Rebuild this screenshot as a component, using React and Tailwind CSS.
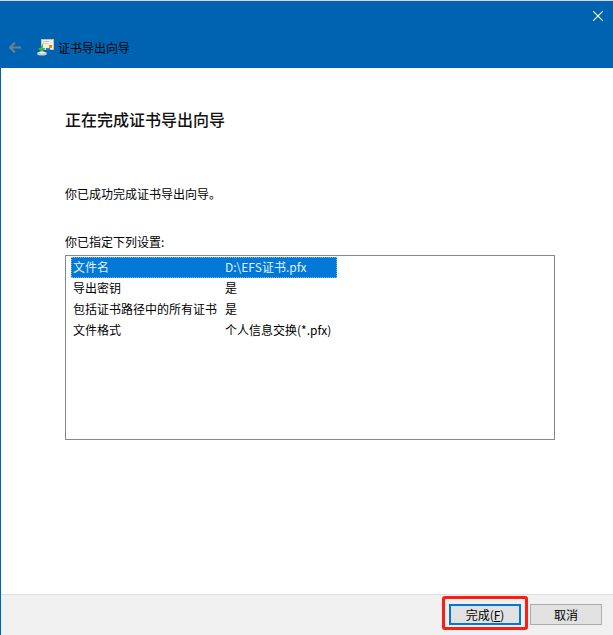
import React from "react";

const rows = [
  ["文件名", "D:\\EFS证书.pfx"],
  ["导出密钥", "是"],
  ["包括证书路径中的所有证书", "是"],
  ["文件格式", "个人信息交换(*.pfx)"],
];

const WizardIcon = () => (
  <svg width="17" height="17" viewBox="0 0 17 17" className="mr-[4px]">
    <rect x="4.5" y="0.5" width="12" height="10" fill="#f3efe2" stroke="#c4bfae" />
    <rect x="6" y="2" width="6" height="1" fill="#c9c3b0" />
    <rect x="6" y="4" width="5" height="1" fill="#d6d1c0" />
    <rect x="12" y="6" width="3" height="3" fill="#e08a12" />
    <rect x="9" y="9" width="4" height="2" fill="#3a78c9" />
    <path d="M6 4 L6 9 L8.5 9 L4.5 13 L1 9 L3.5 9 Z" fill="#3fb83a" />
    <ellipse cx="5" cy="14.5" rx="5" ry="2" fill="#c6cac6" />
    <ellipse cx="5" cy="13.5" rx="3" ry="1" fill="#f4f5f3" />
  </svg>
);

const App = () => {
  return (
    <div className="w-[613px] h-[635px] flex flex-col bg-white text-[12px] text-black overflow-hidden font-['Noto_Sans_CJK_SC','Noto_Sans',sans-serif]">
      <div className="h-px bg-[#d6d6d6]" />
      <header className="h-[67px] bg-[#0063b1] relative flex items-center pt-[26px] shrink-0">
        <svg width="12" height="11" viewBox="0 0 12 11" className="ml-[9px] mr-[16px]">
          <path d="M6 0.5 L1 5.5 L6 10.5 M1 5.5 H12" fill="none" stroke="#6f7f8f" strokeWidth="2" />
        </svg>
        <WizardIcon />
        <span className="text-[12px] leading-4 text-[#050505]">证书导出向导</span>
        <svg width="10" height="10" viewBox="0 0 10 10" className="absolute right-[10px] top-[10px]">
          <path d="M0 0 L10 10 M10 0 L0 10" stroke="#ffffff" strokeWidth="1.1" />
        </svg>
      </header>

      <div className="flex-1 flex flex-col border-l border-[#0063b1]">
        <main className="flex-1 pl-[64px] pr-[58px] flex flex-col">
          <h1 className="mt-[39px] text-[16px] leading-[24px] font-medium text-[#111]">正在完成证书导出向导</h1>
          <p className="mt-[54px] leading-[18px]">你已成功完成证书导出向导。</p>
          <p className="mt-[30px] leading-[18px]">你已指定下列设置:</p>
          <div className="mt-[4px] h-[185px] border border-[#828790] pt-px pl-[5px]">
            {rows.map(([name, value], i) => (
              <div
                key={name}
                className={`h-[21px] w-[266px] flex items-center pl-[2px] pb-[2px] whitespace-nowrap ${i === 0 ? "bg-[#0078d7] text-[#e6f1fb] outline-1 outline-dotted -outline-offset-1 outline-[#7fb4e0]" : ""}`}
              >
                <span className="w-[152px] shrink-0">{name}</span>
                <span>{value}</span>
              </div>
            ))}
          </div>
        </main>

        <footer className="h-[41px] shrink-0 border-t border-[#dfdfdf] bg-[#f0f0f0] flex items-start justify-end pr-[11px] pt-[9px] gap-[9px]">
          <div className="relative">
            <button className="w-[72px] h-[21px] border-2 border-[#0078d7] bg-[#e1e1e1] flex items-center justify-center leading-none">
              完成(<span className="underline">F</span>)
            </button>
            <div className="absolute -left-[7px] -right-[7px] -top-[8px] -bottom-[5px] rounded-[3px] border-[3px] border-[#fa1e14]" />
          </div>
          <button className="w-[72px] h-[21px] border border-[#adadad] bg-[#e1e1e1] flex items-center justify-center leading-none">
            取消
          </button>
        </footer>
      </div>
    </div>
  );
};

export default App;
